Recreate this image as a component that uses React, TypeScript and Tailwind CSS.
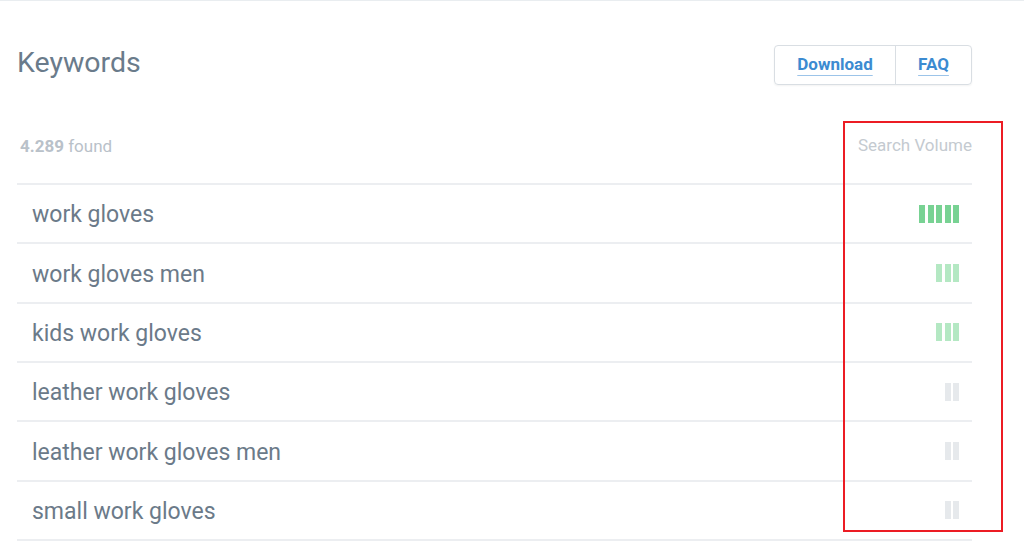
const rows = [
  { keyword: 'work gloves', level: 5 },
  { keyword: 'work gloves men', level: 3 },
  { keyword: 'kids work gloves', level: 3 },
  { keyword: 'leather work gloves', level: 2 },
  { keyword: 'leather work gloves men', level: 2 },
  { keyword: 'small work gloves', level: 2 },
];

function VolumeBars({ level }: { level: number }) {
  const color =
    level >= 5 ? 'bg-[#78d293]' : level >= 3 ? 'bg-[#b4e8c3]' : 'bg-[#e6e9ec]';
  return (
    <div className="flex items-center gap-[2.5px]">
      {Array.from({ length: level }).map((_, i) => (
        <span key={i} className={`block w-[6px] h-[18px] ${color}`} />
      ))}
    </div>
  );
}

export default function App() {
  return (
    <div
      className="relative w-full h-[544px] overflow-hidden bg-white border-t border-[#e9edf0]"
      style={{ fontFamily: 'Roboto, "Liberation Sans", sans-serif' }}
    >
      <div className="pl-[17px] pr-[52px]">
        {/* ─── Header ─── */}
        <div className="flex items-start justify-between pt-[44px]">
          <h1 className="text-[28.5px] leading-[35px] font-normal text-[#6a7b8b]">
            Keywords
          </h1>
          <div className="flex h-[40px] rounded-[4px] border border-[#d9dee3] shadow-[0_1px_2px_rgba(0,0,0,0.05)]">
            <button className="w-[121px] flex items-center justify-center border-r border-[#d9dee3] text-[17px] font-bold text-[#3c8bd1] underline decoration-[#9cc4e9] underline-offset-[5px]">
              Download
            </button>
            <button className="w-[75px] flex items-center justify-center text-[17px] font-bold text-[#3c8bd1] underline decoration-[#9cc4e9] underline-offset-[5px]">
              FAQ
            </button>
          </div>
        </div>

        {/* ─── Sub header ─── */}
        <div className="mt-[50px] h-[50px] flex items-start justify-between border-b-2 border-[#eceef1]">
          <div className="mt-[1px] pl-[3px] text-[17px] leading-[20px] text-[#b9c1c9]">
            <span className="font-bold">4.289</span> found
          </div>
          <div className="text-[17px] leading-[20px] text-[#c4cad0]">Search Volume</div>
        </div>

        {/* ─── Rows ─── */}
        {rows.map((r) => (
          <div
            key={r.keyword}
            className="h-[59.33px] flex items-center justify-between pl-[15px] pr-[13px] border-b-2 border-[#eceef1]"
          >
            <span className="mt-[4px] text-[23px] text-[#6b7a89]">{r.keyword}</span>
            <VolumeBars level={r.level} />
          </div>
        ))}
      </div>

      {/* ─── Annotation ─── */}
      <div className="absolute left-[843px] top-[120px] w-[160px] h-[411px] border-2 border-[#ec1c24]" />
    </div>
  );
}
